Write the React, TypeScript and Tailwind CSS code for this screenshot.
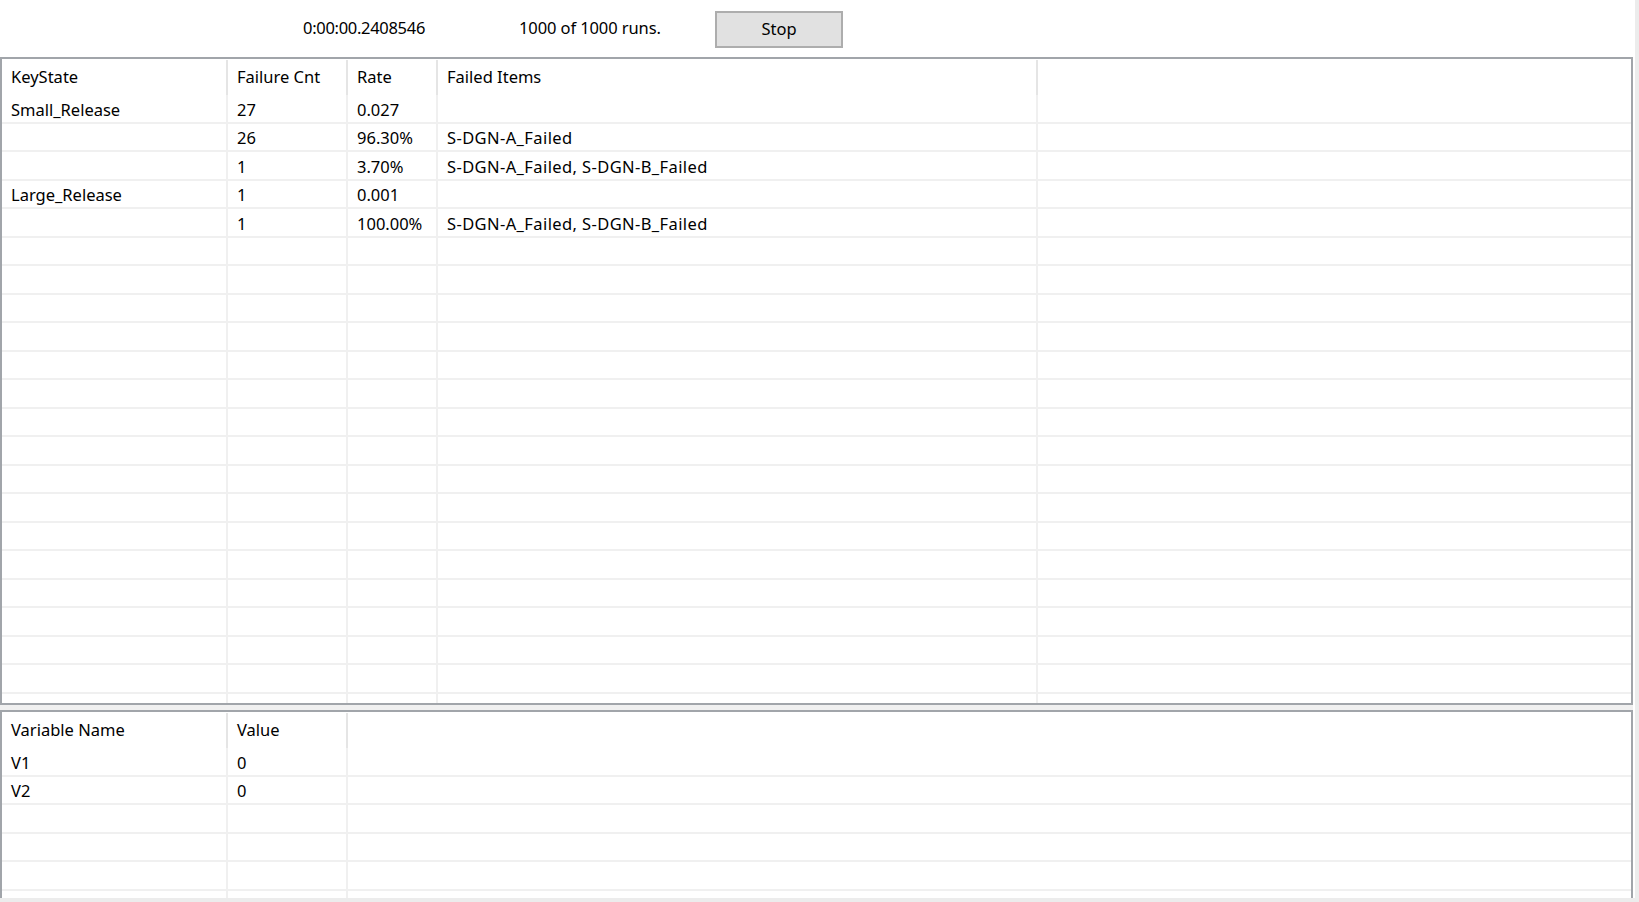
const font = { fontFamily: '"Noto Sans", "Open Sans", sans-serif' }

const topCols = ["w-[226px]", "w-[120px]", "w-[90px]", "w-[600px]"]
const bottomCols = ["w-[226px]", "w-[120px]"]

const failureRows: string[][] = [
  ["Small_Release", "27", "0.027", ""],
  ["", "26", "96.30%", "S-DGN-A_Failed"],
  ["", "1", "3.70%", "S-DGN-A_Failed, S-DGN-B_Failed"],
  ["Large_Release", "1", "0.001", ""],
  ["", "1", "100.00%", "S-DGN-A_Failed, S-DGN-B_Failed"],
]

const variableRows: string[][] = [
  ["V1", "0"],
  ["V2", "0"],
]

function DataRow({ cells, widths }: { cells: string[]; widths: string[] }) {
  return (
    <div className="flex h-[28.5px] shrink-0 border-b-2 border-[#f0f0f0]">
      {widths.map((w, i) => (
        <div
          key={i}
          className={`${w} shrink-0 flex items-center pl-[9px] pt-[4px] border-r-2 border-[#f0f0f0] whitespace-nowrap ${i === 3 ? "tracking-[0.4px]" : ""}`}
        >
          {cells[i] ?? ""}
        </div>
      ))}
      <div className="flex-1" />
    </div>
  )
}

function Grid({
  headers,
  widths,
  rows,
  total,
  className,
}: {
  headers: string[]
  widths: string[]
  rows: string[][]
  total: number
  className: string
}) {
  const filler = Array.from({ length: total - rows.length }, () => [] as string[])
  return (
    <div className={`flex flex-col overflow-hidden bg-white border-[#a1a5aa] ${className}`}>
      <div className="flex h-[36px] shrink-0">
        {headers.map((label, i) => (
          <div key={i} className={`${widths[i]} shrink-0 relative flex items-center pl-[9px] pt-[1px]`}>
            <span>{label}</span>
            <div className="absolute right-0 top-[1px] h-[35px] w-[2px] bg-[#e5e5e5]" />
          </div>
        ))}
        <div className="flex-1" />
      </div>
      {[...rows, ...filler].map((r, i) => (
        <DataRow key={i} cells={r} widths={widths} />
      ))}
    </div>
  )
}

export default function App() {
  return (
    <div className="w-[1639px] h-[902px] bg-white flex flex-col text-[16.5px] text-black overflow-hidden" style={font}>
      <div className="flex flex-1 min-h-0">
        <div className="w-[1633px] flex flex-col">
          <div className="h-[57px] shrink-0 flex items-center pl-[303px]">
            <div className="w-[216px] tracking-[-0.3px]">0:00:00.2408546</div>
            <div className="w-[196px] tracking-[-0.1px]">1000 of 1000 runs.</div>
            <button className="w-[128px] h-[37px] mt-[1px] bg-[#e1e1e1] border-2 border-[#adadad] flex items-center justify-center">
              Stop
            </button>
          </div>
          <Grid
            headers={["KeyState", "Failure Cnt", "Rate", "Failed Items"]}
            widths={topCols}
            rows={failureRows}
            total={23}
            className="h-[648px] shrink-0 border-2"
          />
          <div className="h-[5px] shrink-0 bg-[#f0f0f0]" />
          <Grid
            headers={["Variable Name", "Value"]}
            widths={bottomCols}
            rows={variableRows}
            total={8}
            className="flex-1 min-h-0 border-2 border-b-0"
          />
        </div>
        <div className="w-[2px] bg-white" />
        <div className="w-[4px] bg-[#ececec]" />
      </div>
      <div className="h-[4px] shrink-0 bg-[#ececec]" />
    </div>
  )
}
